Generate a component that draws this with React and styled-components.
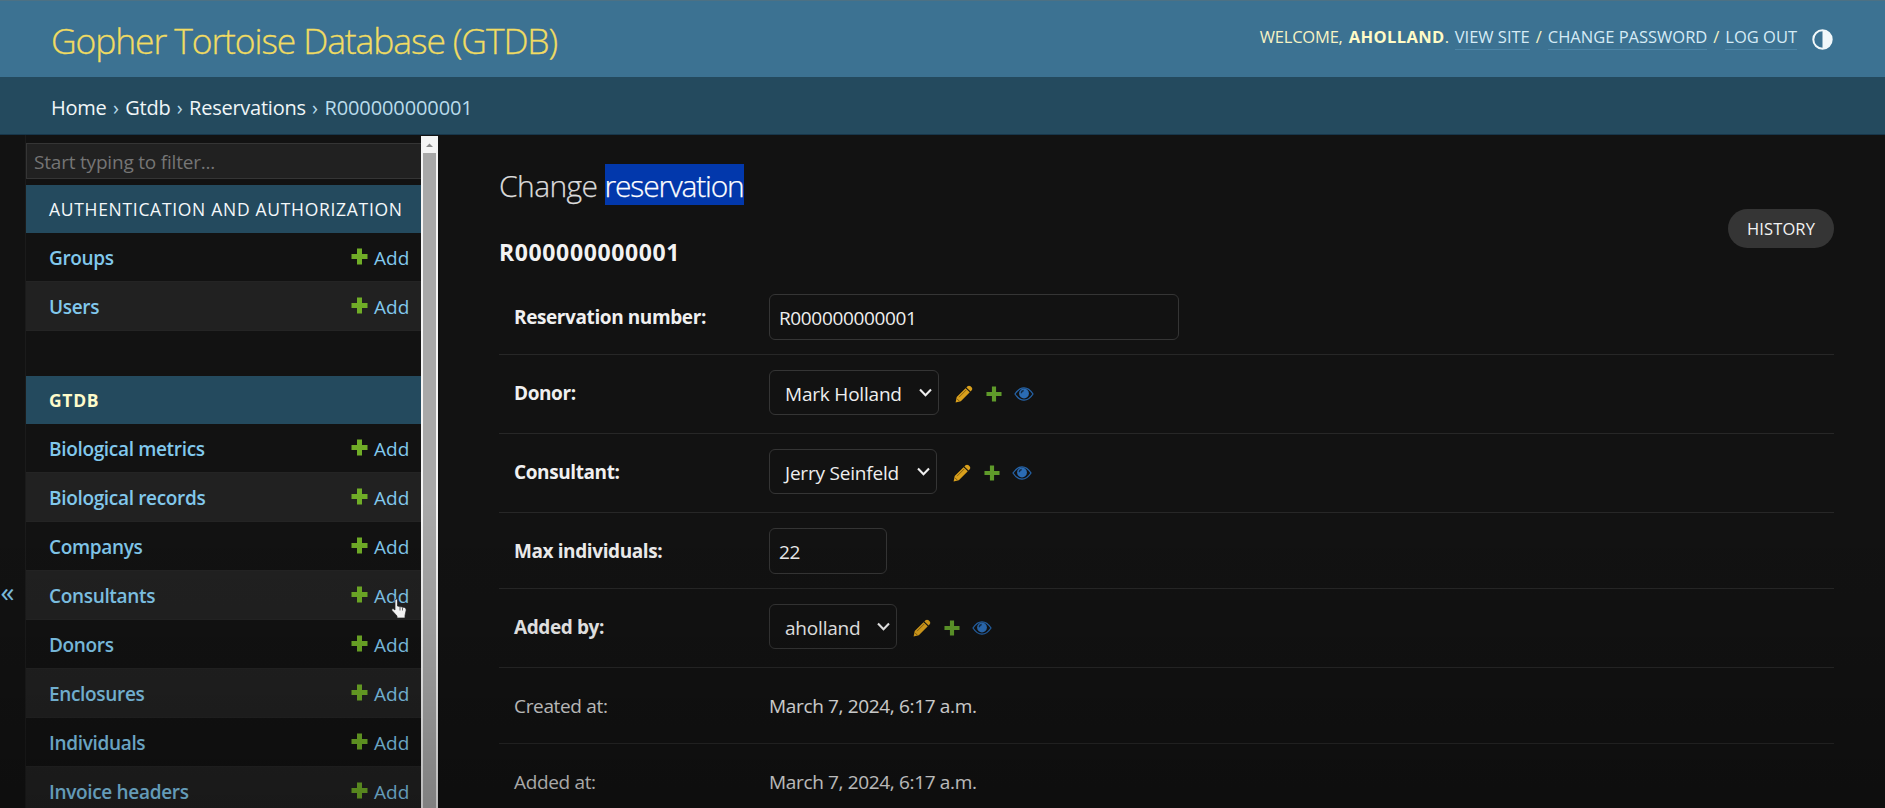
import React from 'react';
import styled, { createGlobalStyle } from 'styled-components';

const GlobalStyle = createGlobalStyle`
  * { box-sizing: border-box; }
  body {
    margin: 0;
    background: #121212;
    color: #e4e4e4;
    font-family: "Open Sans", "Noto Sans", sans-serif;
    font-size: 19px;
    overflow: hidden;
  }
  a { color: inherit; text-decoration: none; }
`;

const Page = styled.div`
  position: relative;
  display: flex;
  flex-direction: column;
  height: 808px;
  overflow: hidden;
`;

const Header = styled.header`
  display: flex;
  justify-content: space-between;
  height: 77px;
  padding: 0 52px 0 51px;
  background: #3c7292;
  border-top: 1px solid #4d7184;
`;

const SiteName = styled.h1`
  margin: 0;
  font-size: 35.5px;
  font-weight: 300;
  line-height: 78px;
  letter-spacing: -1.13px;
  color: #f1dc62;
  -webkit-text-stroke: 0.3px #f1dc62;
`;

const UserTools = styled.nav`
  display: flex;
  align-items: flex-start;
  padding-top: 24px;
  font-size: 16.5px;
  line-height: 24px;
  white-space: pre;
  color: #f6f3c4;
`;

const Welcome = styled.span`
  letter-spacing: -0.19px;
`;

const UserName = styled.strong`
  letter-spacing: 0.4px;
  margin-left: 6px;
  color: #fffbc6;
`;

const NameEnd = styled.span`
  width: 10px;
`;

const ToolLink = styled.a`
  color: #d5ebf6;
  border-bottom: 1px solid #4c85a7;
`;

const ToolSep = styled.span`
  width: 18px;
  text-align: center;
`;

const ThemeIcon = styled.svg`
  width: 21px;
  height: 21px;
  margin: 4px 0 0 15px;
`;

const Breadcrumbs = styled.nav`
  height: 58px;
  padding: 0 51px;
  background: #244a5e;
  border-bottom: 1px solid #17364a;
  font-size: 20px;
  line-height: 61px;
  letter-spacing: -0.1px;
  word-spacing: 1.3px;
  color: #b9dcec;
`;

const Crumb = styled.a`
  letter-spacing: -0.25px;
  color: #f0f6f8;
`;

const Body = styled.div`
  display: flex;
  flex: 1;
  min-height: 0;
`;

const SidebarToggle = styled.button`
  display: flex;
  justify-content: center;
  align-items: center;
  width: 26px;
  padding: 238px 10px 0 0;
  border: 0;
  border-right: 1px solid #1b1b1b;
  background: none;
  color: #81c4e6;
  font: 400 28px/30px "Open Sans", sans-serif;
`;

const Sidebar = styled.aside`
  width: 395px;
  padding-top: 8px;
  overflow: hidden;
`;

const FilterInput = styled.input`
  display: block;
  width: 100%;
  height: 36px;
  margin-bottom: 6px;
  padding: 2px 7px 0;
  border: 1px solid #353535;
  border-right: 0;
  background: #212121;
  font: 400 19px "Open Sans", sans-serif;
  letter-spacing: -0.2px;
  &::placeholder { color: #757575; opacity: 1; }
`;

const Module = styled.section`
  margin-bottom: 45px;
`;

const Caption = styled.h2`
  margin: 0;
  height: 48px;
  padding-left: 23px;
  background: #244a5e;
  font-size: 17.5px;
  line-height: 48px;
  letter-spacing: 0.7px;
  font-weight: ${(p) => (p.$current ? 700 : 400)};
  color: ${(p) => (p.$current ? '#fffccb' : '#f4f8fa')};
  white-space: nowrap;
`;

const ModelRow = styled.div`
  display: flex;
  justify-content: space-between;
  height: 49px;
  padding: 0 11px 0 23px;
  border-bottom: 1px solid #242424;
  background: ${(p) => (p.$striped ? '#212121' : '#121212')};
  line-height: 50px;
  color: #81c8ec;
`;

const ModelLink = styled.a`
  font-weight: 600;
  letter-spacing: -0.33px;
`;

const AddLink = styled.a`
  display: flex;
  align-items: flex-start;
  gap: 6px;
  width: 59px;
`;

const AddIcon = styled.svg`
  width: 17px;
  height: 17px;
  margin-top: 15px;
`;

const Scrollbar = styled.div`
  display: flex;
  flex-direction: column;
  align-items: center;
  width: 17px;
  background: #f4f4f4;
  margin-top: 1px;
`;

const ScrollArrow = styled.svg`
  width: 17px;
  height: 17px;
  flex: none;
`;

const ScrollThumb = styled.div`
  width: 13px;
  flex: 1;
  background: #a8a8a8;
`;

const Main = styled.main`
  flex: 1;
  padding: 29px 51px 0 61px;
`;

const Heading = styled.div`
  display: flex;
  justify-content: space-between;
  align-items: flex-start;
`;

const PageTitle = styled.h1`
  margin: 0;
  height: 41px;
  font-size: 30px;
  font-weight: 300;
  line-height: 44px;
  letter-spacing: -0.6px;
  color: #dcdcdc;
  -webkit-text-stroke: 0.25px currentColor;
`;

const Selected = styled.span`
  display: inline-block;
  height: 41px;
  background: #0238ac;
  color: #fff;
  letter-spacing: -1.19px;
`;

const ObjectName = styled.h2`
  margin: 31px 0 11px;
  font-size: 23px;
  font-weight: 700;
  line-height: 32px;
  letter-spacing: 0.62px;
  color: #f2f2f2;
`;

const HistoryButton = styled.a`
  width: 106px;
  height: 39px;
  margin-top: 45px;
  border-radius: 20px;
  background: #353535;
  color: #f2f2f2;
  font-size: 16.5px;
  line-height: 39px;
  letter-spacing: 0.12px;
  text-align: center;
`;

const FormRow = styled.div`
  display: flex;
  height: ${(p) => p.$h}px;
  padding: 15px 0 0 15px;
  border-bottom: 1px solid #272727;
  line-height: 46px;
`;

const Label = styled.label`
  width: 255px;
  font-weight: ${(p) => (p.$plain ? 400 : 700)};
  letter-spacing: ${(p) => (p.$plain ? -0.34 : -0.4)}px;
  color: ${(p) => (p.$plain ? '#d6d6d6' : '#f0f0f0')};
`;

const TextBox = styled.input`
  width: ${(p) => p.$w}px;
  height: 46px;
  padding: 2px 9px 0;
  border: 1px solid #353535;
  border-radius: 6px;
  background: #121212;
  color: #eee;
  font: 400 19px "Open Sans", sans-serif;
  letter-spacing: -0.36px;
`;

const SelectBox = styled.div`
  display: flex;
  justify-content: space-between;
  width: ${(p) => p.$w}px;
  height: 45px;
  padding: 0 6px 0 15px;
  border: 1px solid #353535;
  border-radius: 6px;
  line-height: 46px;
  letter-spacing: -0.2px;
  color: #eee;
`;

const Chevron = styled.svg`
  width: 13px;
  height: 9px;
  margin-top: 17px;
`;

const Actions = styled.div`
  display: flex;
  align-items: center;
  height: 47px;
  margin-left: 16px;
`;

const ActionIcon = styled.svg`
  width: ${(p) => p.$w}px;
  height: 18px;
  margin-right: ${(p) => p.$gap || 0}px;
`;

const ReadOnly = styled.div`
  letter-spacing: -0.34px;
  color: #ececec;
`;

const Shade = styled.div`
  position: absolute;
  inset: 500px 0 0 0;
  pointer-events: none;
  background: linear-gradient(rgba(0, 0, 0, 0), rgba(0, 0, 0, 0.07) 40%, rgba(0, 0, 0, 0.24));
`;

const Pointer = styled.svg`
  position: absolute;
  left: 391px;
  top: 598px;
  width: 16px;
  height: 21px;
`;

const PLUS = 'M6 0.5h5v5.5h5.5v5H11v5.500H6V11H0.500V6H6z';

const Add = () => (
  <AddLink href="#">
    <AddIcon viewBox="0 0 17 17"><path d={PLUS} fill="#70ad27" /></AddIcon>
    Add
  </AddLink>
);

const Model = ({ name, striped }) => (
  <ModelRow $striped={striped}>
    <ModelLink href="#">{name}</ModelLink>
    <Add />
  </ModelRow>
);

const RelatedActions = () => (
  <Actions>
    <ActionIcon $w={18} $gap={13} viewBox="0 0 18 18">
      <path d="M12.500 1.300Q14 0 15.600 1.300L16.800 2.500Q18 4 16.700 5.300L15.600 6.400L11.400 2.400zM10.600 3.200L14.800 7.200L5.800 16.200L0.600 17.500L1.700 12.100z" fill="#d9a01c" />
      <path d="M4 12.200L11.300 4.900M2 13.800L4.200 16" stroke="#7a5710" strokeWidth="0.900" fill="none" />
    </ActionIcon>
    <ActionIcon $w={16} $gap={12} viewBox="0 0 17 17"><path d="M6.300 0.500h4.400v5.800h5.800v4.400h-5.800v5.800H6.300v-5.800H0.500V6.300h5.800z" fill="#5f9a2a" /></ActionIcon>
    <ActionIcon $w={20} viewBox="0 0 20 18">
      <path d="M1 9Q5 2.800 10 2.800T19 9Q15 15.200 10 15.200T1 9z" fill="none" stroke="#2563a8" strokeWidth="1.300" />
      <circle cx="10" cy="8.500" r="4.900" fill="#2b6cb5" />
      <path d="M7.300 8.300Q7.400 5.900 9.700 5.500" fill="none" stroke="#132c48" strokeWidth="1.300" />
    </ActionIcon>
  </Actions>
);

const Select = ({ value, width }) => (
  <>
    <SelectBox $w={width}>
      {value}
      <Chevron viewBox="0 0 13 9"><path d="M1 1.500L6.500 7.200L12 1.500" fill="none" stroke="#eee" strokeWidth="2.100" /></Chevron>
    </SelectBox>
    <RelatedActions />
  </>
);

const AUTH_MODELS = ['Groups', 'Users'];
const GTDB_MODELS = [
  'Biological metrics', 'Biological records', 'Companys', 'Consultants',
  'Donors', 'Enclosures', 'Individuals', 'Invoice headers',
];

export default function App() {
  return (
    <Page>
      <GlobalStyle />
      <Header>
        <SiteName>Gopher Tortoise Database (GTDB)</SiteName>
        <UserTools>
          <Welcome>WELCOME,</Welcome>
          <UserName>AHOLLAND</UserName>
          <NameEnd>.</NameEnd>
          <ToolLink href="#">VIEW SITE</ToolLink>
          <ToolSep>/</ToolSep>
          <ToolLink href="#">CHANGE PASSWORD</ToolLink>
          <ToolSep>/</ToolSep>
          <ToolLink href="#">LOG OUT</ToolLink>
          <ThemeIcon viewBox="0 0 21 21">
            <circle cx="10.500" cy="10.500" r="9.200" fill="none" stroke="#f2f8fa" strokeWidth="2" />
            <path d="M10.500 1.500a9 9 0 0 1 0 18z" fill="#f2f8fa" />
          </ThemeIcon>
        </UserTools>
      </Header>
      <Breadcrumbs>
        <Crumb href="#">Home</Crumb> › <Crumb href="#">Gtdb</Crumb> › <Crumb href="#">Reservations</Crumb> › R000000000001
      </Breadcrumbs>
      <Body>
        <SidebarToggle>«</SidebarToggle>
        <Sidebar>
          <FilterInput placeholder="Start typing to filter..." />
          <Module>
            <Caption>AUTHENTICATION AND AUTHORIZATION</Caption>
            {AUTH_MODELS.map((m, i) => <Model key={m} name={m} striped={i % 2 === 1} />)}
          </Module>
          <Module>
            <Caption $current>GTDB</Caption>
            {GTDB_MODELS.map((m, i) => <Model key={m} name={m} striped={i % 2 === 1} />)}
          </Module>
        </Sidebar>
        <Scrollbar>
          <ScrollArrow viewBox="0 0 17 17"><path d="M5 11L8.500 7.500L12 11z" fill="#8a8a8a" /></ScrollArrow>
          <ScrollThumb />
        </Scrollbar>
        <Main>
          <Heading>
            <div>
              <PageTitle>Change <Selected>reservation</Selected></PageTitle>
              <ObjectName>R000000000001</ObjectName>
            </div>
            <HistoryButton href="#">HISTORY</HistoryButton>
          </Heading>
          <FormRow $h={76}>
            <Label>Reservation number:</Label>
            <TextBox $w={410} defaultValue="R000000000001" />
          </FormRow>
          <FormRow $h={79}>
            <Label>Donor:</Label>
            <Select value="Mark Holland" width={170} />
          </FormRow>
          <FormRow $h={79}>
            <Label>Consultant:</Label>
            <Select value="Jerry Seinfeld" width={168} />
          </FormRow>
          <FormRow $h={76}>
            <Label>Max individuals:</Label>
            <TextBox $w={118} defaultValue="22" />
          </FormRow>
          <FormRow $h={79}>
            <Label>Added by:</Label>
            <Select value="aholland" width={128} />
          </FormRow>
          <FormRow $h={76}>
            <Label $plain>Created at:</Label>
            <ReadOnly>March 7, 2024, 6:17 a.m.</ReadOnly>
          </FormRow>
          <FormRow $h={76}>
            <Label $plain>Added at:</Label>
            <ReadOnly>March 7, 2024, 6:17 a.m.</ReadOnly>
          </FormRow>
        </Main>
      </Body>
      <Shade />
      <Pointer viewBox="0 0 16 21">
        <path d="M4 1.800Q5.200 0.200 6.500 1.800V8L13.500 9.500Q15.300 10 15.200 12L14 17.500V20H6V18L1 12.500Q0.200 10.800 2 10.500L4 12z" fill="#f2f2f2" stroke="#222" strokeWidth="0.700" />
        <path d="M9 9v3.500M11.500 9.500v3" stroke="#444" strokeWidth="0.800" />
      </Pointer>
    </Page>
  );
}
